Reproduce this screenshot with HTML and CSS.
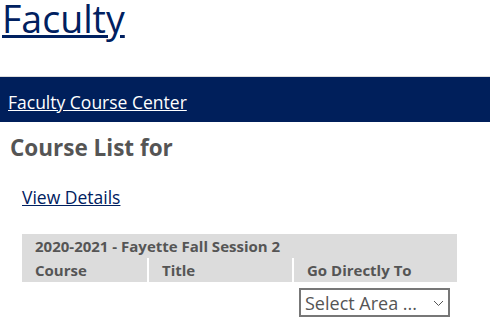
FILE: index.html
```html
<!DOCTYPE html>
<html lang="en">
<head>
    <meta charset="UTF-8">
    <title>Faculty</title>
    <link rel="stylesheet" href="styles.css">
</head>
<body>
<header class="site-header">
    <a href="#" class="site-title">Faculty</a>
</header>
<nav class="nav-bar">
    <a href="#">Faculty Course Center</a>
</nav>
<div class="content">
    <h2>Course List for</h2>
    <p class="details"><a href="#">View Details</a></p>
    <table class="course-table">
        <thead>
            <tr>
                <th colspan="3" class="term">2020-2021 - Fayette Fall Session 2</th>
            </tr>
            <tr>
                <th class="col-course">Course</th>
                <th class="col-title sep">Title</th>
                <th class="col-go sep">Go Directly To</th>
            </tr>
        </thead>
        <tbody>
            <tr>
                <td></td>
                <td></td>
                <td class="go-cell">
                    <div class="select-wrap">
                        <select class="area-select">
                            <option>Select Area ...</option>
                            <option>Roster</option>
                            <option>Grades</option>
                        </select>
                        <svg class="chevron" width="11" height="7" viewBox="0 0 11 7"><path d="M1 1 L5.5 5.5 L10 1" fill="none" stroke="#555" stroke-width="1"/></svg>
                    </div>
                </td>
            </tr>
        </tbody>
    </table>
</div>
</body>
</html>
```

FILE: styles.css
```css
* { box-sizing: border-box; }
body {
    font-family: "Open Sans", Arial, sans-serif;
    margin: 0;
    background: #fff;
    color: #555;
}
.site-header {
    height: 77px;
    padding: 0 0 0 2px;
    border-bottom: 1px solid #ddd;
}
.site-title {
    display: inline-block;
    font-size: 37.5px;
    line-height: 46px;
    color: #002060;
    margin-top: -4px;
}
.nav-bar {
    background: #001f5b;
    height: 45px;
    padding: 0 8px;
    display: flex;
    align-items: center;
}
.nav-bar a {
    color: #fff;
    font-size: 17.5px;
    padding-top: 4px;
}
.content {
    padding: 0 10px;
}
h2 {
    font-size: 22.5px;
    font-weight: bold;
    color: #555;
    margin: 11px 0 0;
    line-height: 30px;
}
.details {
    margin: 22px 0 0 12px;
    font-size: 17.5px;
    line-height: 24px;
}
.details a {
    color: #002060;
}
.course-table {
    margin: 25px 0 0 12px;
    width: 435px;
    border-collapse: collapse;
}
.course-table th {
    background: #dcdcdc;
    text-align: left;
    font-size: 15px;
    font-weight: bold;
    color: #555;
    padding: 0 12px 0 13px;
    height: 24px;
    line-height: 24px;
}
.course-table th.sep {
    border-left: 2px solid #fff;
}
.col-course { width: 126px; }
.col-title { width: 145px; }
.course-table td {
    padding: 6px 0 0 6px;
}
.select-wrap {
    position: relative;
    width: 151px;
}
.area-select {
    appearance: none;
    -webkit-appearance: none;
    width: 151px;
    height: 29px;
    font-family: "Open Sans", Arial, sans-serif;
    font-size: 18px;
    color: #555;
    border: 2px solid #777;
    border-radius: 0;
    background: #fff;
    padding: 0 4px;
    display: block;
}
.chevron {
    position: absolute;
    right: 6px;
    top: 12px;
    pointer-events: none;
}
```
